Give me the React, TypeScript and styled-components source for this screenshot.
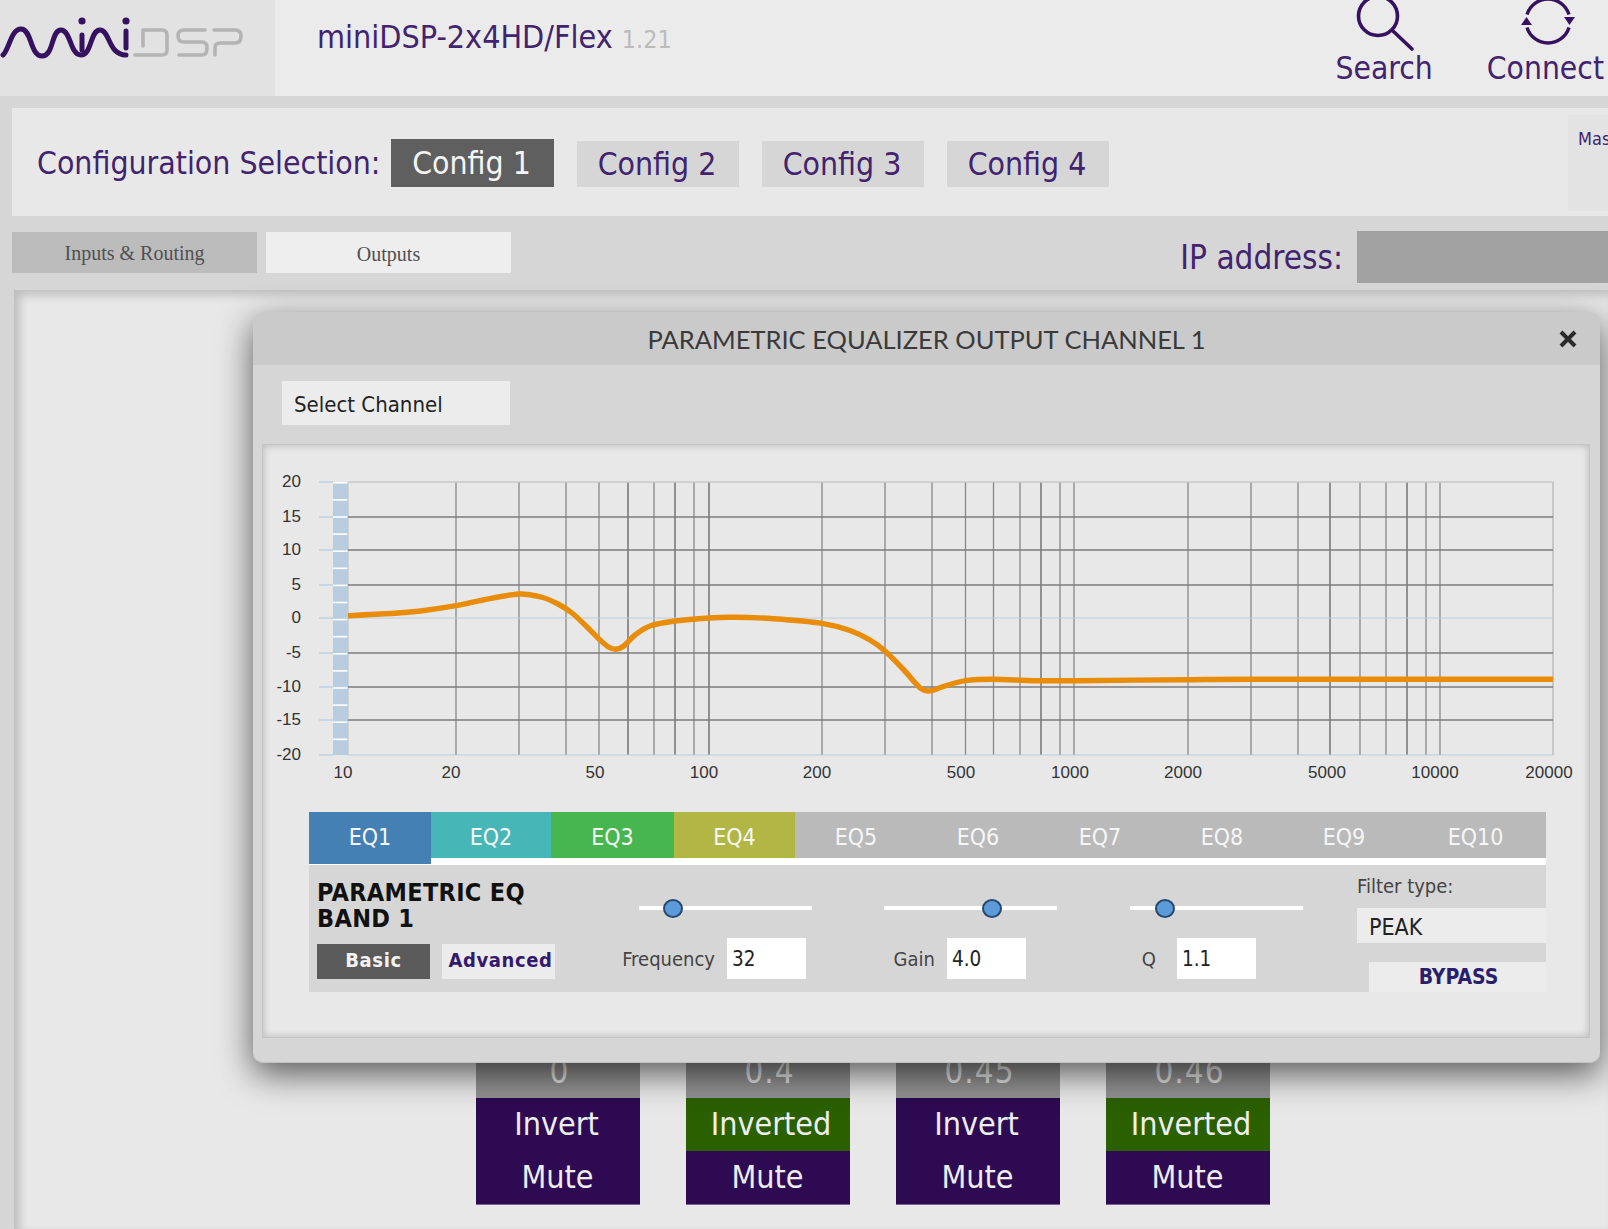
import React from 'react'
import styled, { createGlobalStyle } from 'styled-components'

const PURPLE = '#41236f'
const FONT = '"DejaVu Sans Condensed", "DejaVu Sans", sans-serif'

const CONFIGS = ['Config 1', 'Config 2', 'Config 3', 'Config 4']
const EQ_TABS = [
  { name: 'EQ1', color: '#4480b4' },
  { name: 'EQ2', color: '#47b6b6' },
  { name: 'EQ3', color: '#47b64e' },
  { name: 'EQ4', color: '#b2b645' },
  { name: 'EQ5', color: '#bababa' },
  { name: 'EQ6', color: '#bababa' },
  { name: 'EQ7', color: '#bababa' },
  { name: 'EQ8', color: '#bababa' },
  { name: 'EQ9', color: '#bababa' },
  { name: 'EQ10', color: '#bababa' },
]
const CHANNELS = [
  { delay: '0', inverted: false },
  { delay: '0.4', inverted: true },
  { delay: '0.45', inverted: false },
  { delay: '0.46', inverted: true },
]

// chart coordinates are page pixels, the svg viewBox starts at the panel corner
const PLOT = { left: 348, right: 1553, top: 482, bottom: 755, stripLeft: 333, tickLeft: 319 }
const GAIN_LINES = [
  { label: '20', y: 482 },
  { label: '15', y: 517 },
  { label: '10', y: 550 },
  { label: '5', y: 585 },
  { label: '0', y: 618 },
  { label: '-5', y: 653 },
  { label: '-10', y: 687 },
  { label: '-15', y: 720 },
  { label: '-20', y: 755 },
]
const FREQ_LINES = [
  456, 519, 566, 599, 628, 654, 675, 694, 709, 822, 885, 932, 965.5, 993.5, 1020, 1041, 1060, 1074, 1188,
  1251, 1298, 1330, 1360, 1386, 1407, 1426, 1440,
]
const HEAVY_LINES = [628, 675, 709, 1041, 1330, 1407]
const FREQ_LABELS = [
  { label: '10', x: 343 },
  { label: '20', x: 451 },
  { label: '50', x: 595 },
  { label: '100', x: 704 },
  { label: '200', x: 817 },
  { label: '500', x: 961 },
  { label: '1000', x: 1070 },
  { label: '2000', x: 1183 },
  { label: '5000', x: 1327 },
  { label: '10000', x: 1435 },
  { label: '20000', x: 1549 },
]
const CURVE: [number, number][] = [
  [348, 615.7], [394, 613.3], [420.7, 611], [456, 605.7], [483, 600], [519, 594], [541, 597], [558, 604],
  [572, 613], [586, 626], [599, 639], [608, 646.7], [615.8, 649.3], [623.8, 646], [635, 635], [650.6, 625.7],
  [675, 621], [708.7, 618], [733, 617.3], [773.4, 618.7], [822, 623.3], [850, 630.5], [870, 640], [885, 651],
  [903, 669], [920.7, 688.3], [931, 690.7], [943, 686.7], [965.5, 680.7], [993.5, 679.3], [1035, 680.7],
  [1074, 680.7], [1188, 679.7], [1251, 679.3], [1553, 679.3],
]

const smoothPath = (pts: [number, number][]) => {
  let d = `M${pts[0][0]},${pts[0][1]}`
  for (let i = 0; i < pts.length - 1; i++) {
    const p0 = pts[Math.max(i - 1, 0)]
    const p1 = pts[i]
    const p2 = pts[i + 1]
    const p3 = pts[Math.min(i + 2, pts.length - 1)]
    const c1x = p1[0] + (p2[0] - p0[0]) / 6
    const c1y = p1[1] + (p2[1] - p0[1]) / 6
    const c2x = p2[0] - (p3[0] - p1[0]) / 6
    const c2y = p2[1] - (p3[1] - p1[1]) / 6
    d += ` C${c1x.toFixed(1)},${c1y.toFixed(1)} ${c2x.toFixed(1)},${c2y.toFixed(1)} ${p2[0]},${p2[1]}`
  }
  return d
}

const Logo = () => (
  <svg width="250" height="70" viewBox="0 0 250 70" fill="none" aria-label="miniDSP">
    <g stroke="#36115f" strokeWidth="5" strokeLinecap="round">
      <path d="M3,55 C9,50 11,29 21,29 C32,29 30,56 42,56 C54,56 51,30 61,30 C71,30 70,55 81,55 C92,55 90,30 100,30 C110,30 108,55 126,55" />
      <path d="M82,35 V50 M126,31 V48" />
    </g>
    <circle cx="82" cy="21" r="3.6" fill="#36115f" />
    <circle cx="126" cy="21" r="3.6" fill="#36115f" />
    <g stroke="#b4b4b4" strokeWidth="3.6" strokeLinecap="round" strokeLinejoin="round">
      <path d="M135,55 H162 Q167,55 167,50 V35 Q167,30 162,30 H143 V46" />
      <path d="M205,30 H184 Q178,30 178,36 Q178,42 184,42 H202 Q207,42 207,48 Q207,55 202,55 H179" />
      <path d="M215,55 V48 Q215,43 220,43 H235 Q241,43 241,36 Q241,30 235,30 H214" />
    </g>
  </svg>
)

const SearchIcon = () => (
  <svg width="60" height="52" viewBox="0 0 60 52" fill="none" stroke="#36115f" strokeWidth="3.6" strokeLinecap="round">
    <circle cx="24" cy="18" r="19.5" />
    <path d="M39,33 L58,51" />
  </svg>
)

const ConnectIcon = () => (
  <svg width="60" height="52" viewBox="0 0 60 52" fill="none" stroke="#36115f" strokeWidth="3.4">
    <path d="M12,16.5 A22,22 0 0 1 54,16.5" />
    <path d="M54,29.5 A22,22 0 0 1 12,29.5" />
    <path d="M49,19 H60 L54.5,27 Z" fill="#36115f" stroke="none" />
    <path d="M6,27 H17 L11.5,19 Z" fill="#36115f" stroke="none" />
  </svg>
)

const CloseIcon = () => (
  <svg width="18" height="18" viewBox="0 0 18 18" stroke="#2a2a2a" strokeWidth="4">
    <path d="M2,2 L16,16 M16,2 L2,16" />
  </svg>
)

const EqChart = () => (
  <ChartSvg width="1326" height="340" viewBox="263 460 1326 340">
    <rect x={PLOT.stripLeft} y={PLOT.top} width={PLOT.left - PLOT.stripLeft} height={PLOT.bottom - PLOT.top} fill="#b9cde0" />
    {Array.from({ length: 16 }, (_, i) => (
      <rect key={i} x={PLOT.stripLeft} y={PLOT.top + i * 17.1} width={PLOT.left - PLOT.stripLeft} height="1.6" fill="#fff" />
    ))}
    {FREQ_LINES.map((x) => (
      <line
        key={x}
        x1={x}
        x2={x}
        y1={PLOT.top}
        y2={PLOT.bottom}
        stroke={HEAVY_LINES.includes(x) ? '#909090' : '#888888'}
        strokeWidth={HEAVY_LINES.includes(x) ? 2 : 1.3}
      />
    ))}
    <line x1={PLOT.left} x2={PLOT.left} y1={PLOT.top} y2={PLOT.bottom} stroke="#c4c4c4" strokeWidth="1.2" />
    <line x1={PLOT.right} x2={PLOT.right} y1={PLOT.top} y2={PLOT.bottom} stroke="#bdbdbd" strokeWidth="1.5" />
    {GAIN_LINES.map(({ label, y }) => {
      const soft = label === '0' || label === '-20'
      const top = label === '20'
      return (
        <g key={label}>
          <line x1={PLOT.tickLeft} x2={PLOT.stripLeft} y1={y} y2={y} stroke="#b9cde0" strokeWidth="1.3" />
          <line
            x1={PLOT.left}
            x2={PLOT.right}
            y1={y}
            y2={y}
            stroke={soft ? '#b9cde0' : top ? '#c8c8c8' : '#7d7d7d'}
            strokeWidth={soft ? 1.2 : 1.5}
          />
          <AxisText x="301" y={y + 4.5} textAnchor="end">
            {label}
          </AxisText>
        </g>
      )
    })}
    {FREQ_LABELS.map(({ label, x }) => (
      <AxisText key={label} x={x} y="778" textAnchor="middle">
        {label}
      </AxisText>
    ))}
    <path d={smoothPath(CURVE)} fill="none" stroke="#e88c0a" strokeWidth="5.4" strokeLinejoin="round" />
  </ChartSvg>
)

const GlobalStyle = createGlobalStyle`
  html, body {
    margin: 0;
    padding: 0;
    background: #d6d6d6;
    overflow: hidden;
  }
  * {
    box-sizing: border-box;
  }
`

const App: React.FC = () => {
  return (
    <Page>
      <GlobalStyle />
      <Header>
        <LogoBlock>
          <Logo />
        </LogoBlock>
        <DeviceTitle>
          miniDSP-2x4HD/Flex<Version>1.21</Version>
        </DeviceTitle>
        <HeaderActions>
          <HeaderAction>
            <SearchIcon />
            <span>Search</span>
          </HeaderAction>
          <HeaderAction>
            <ConnectIcon />
            <span>Connect</span>
          </HeaderAction>
        </HeaderActions>
      </Header>

      <ConfigBar>
        <ConfigLabel>Configuration Selection:</ConfigLabel>
        <ConfigButtons>
          {CONFIGS.map((name, i) => (
            <ConfigButton key={name} $active={i === 0}>
              {name}
            </ConfigButton>
          ))}
        </ConfigButtons>
        <MasterBox>Mas</MasterBox>
      </ConfigBar>

      <TabRow>
        <PageTab>Inputs &amp; Routing</PageTab>
        <PageTab $active>Outputs</PageTab>
        <IpLabel>IP address:</IpLabel>
        <IpBox />
      </TabRow>

      <Frame>
        <Channels>
          {CHANNELS.map((ch) => (
            <Channel key={ch.delay}>
              <DelayValue>{ch.delay}</DelayValue>
              <ChannelButton $green={ch.inverted}>{ch.inverted ? 'Inverted' : 'Invert'}</ChannelButton>
              <MuteButton>Mute</MuteButton>
            </Channel>
          ))}
        </Channels>
      </Frame>

      <Modal>
        <ModalHeader>
          <span />
          <ModalTitle>PARAMETRIC EQUALIZER OUTPUT CHANNEL 1</ModalTitle>
          <CloseButton>
            <CloseIcon />
          </CloseButton>
        </ModalHeader>
        <ModalToolbar>
          <SelectChannel>Select Channel</SelectChannel>
        </ModalToolbar>
        <ModalPanel>
          <EqChart />
          <EqTabs>
            {EQ_TABS.map((tab, i) => (
              <EqTab key={tab.name} $color={tab.color} $active={i === 0}>
                {tab.name}
              </EqTab>
            ))}
          </EqTabs>
          <BandPanel>
            <BandInfo>
              <BandTitle>
                PARAMETRIC EQ
                <br />
                BAND 1
              </BandTitle>
              <ModeButtons>
                <ModeButton $active>Basic</ModeButton>
                <ModeButton>Advanced</ModeButton>
              </ModeButtons>
            </BandInfo>
            <SliderGroup $left={84}>
              <SliderTrack>
                <SliderThumb $pos={34} />
              </SliderTrack>
              <ValueRow $inset={6} $gap={12}>
                <ValueLabel>Frequency</ValueLabel>
                <ValueBox>32</ValueBox>
              </ValueRow>
            </SliderGroup>
            <SliderGroup $left={72}>
              <SliderTrack>
                <SliderThumb $pos={108} />
              </SliderTrack>
              <ValueRow $inset={31} $gap={12}>
                <ValueLabel>Gain</ValueLabel>
                <ValueBox>4.0</ValueBox>
              </ValueRow>
            </SliderGroup>
            <SliderGroup $left={73}>
              <SliderTrack>
                <SliderThumb $pos={35} />
              </SliderTrack>
              <ValueRow $inset={47} $gap={21}>
                <ValueLabel>Q</ValueLabel>
                <ValueBox>1.1</ValueBox>
              </ValueRow>
            </SliderGroup>
            <FilterColumn>
              <ValueLabel>Filter type:</ValueLabel>
              <FilterSelect>PEAK</FilterSelect>
              <BypassButton>BYPASS</BypassButton>
            </FilterColumn>
          </BandPanel>
        </ModalPanel>
      </Modal>
    </Page>
  )
}

export default App

const Page = styled.div`
  position: relative;
  width: 1608px;
  height: 1229px;
  overflow: hidden;
  background: #d6d6d6;
  font-family: ${FONT};
  color: ${PURPLE};
`

const Header = styled.header`
  display: flex;
  height: 96px;
  background: #ebebeb;
`

const LogoBlock = styled.div`
  width: 275px;
  background: #e2e2e2;
`

const DeviceTitle = styled.div`
  margin: 17px 0 0 42px;
  font-size: 32px;
  line-height: 40px;
  white-space: nowrap;
`

const Version = styled.span`
  margin-left: 9px;
  font-size: 25px;
  color: #bbbbbb;
`

const HeaderActions = styled.div`
  display: flex;
  gap: 54px;
  margin-left: auto;
  padding-right: 4px;
`

const HeaderAction = styled.div`
  display: flex;
  flex-direction: column;
  align-items: center;
  font-size: 31.5px;
  line-height: 38px;
  svg {
    display: block;
    margin-top: -2px;
    overflow: visible;
  }
  span {
    margin-top: -1px;
  }
`

const ConfigBar = styled.div`
  display: flex;
  align-items: center;
  height: 108px;
  margin: 12px 0 15px 12px;
  padding: 2px 0 0 25px;
  background: #e8e8e8;
`

const ConfigLabel = styled.div`
  width: 354px;
  font-size: 31.7px;
  white-space: nowrap;
`

const ConfigButtons = styled.div`
  display: flex;
  align-items: flex-end;
  gap: 23px;
  height: 48px;
`

const ConfigButton = styled.div<{ $active?: boolean }>`
  display: flex;
  align-items: center;
  justify-content: center;
  width: ${({ $active }) => ($active ? '163px' : '162px')};
  height: ${({ $active }) => ($active ? '48px' : '46px')};
  padding-right: 2px;
  font-size: 31.7px;
  background: ${({ $active }) => ($active ? '#5f5f5f' : '#d6d6d6')};
  color: ${({ $active }) => ($active ? '#f4f4f4' : PURPLE)};
`

const MasterBox = styled.div`
  align-self: stretch;
  width: 40px;
  margin: 5px 0 5px auto;
  padding: 13px 0 0 10px;
  overflow: hidden;
  font-size: 18px;
  white-space: nowrap;
  background: #e3e3e3;
`

const TabRow = styled.div`
  display: flex;
  height: 52px;
  padding-left: 12px;
`

const PageTab = styled.div<{ $active?: boolean }>`
  display: flex;
  align-items: center;
  justify-content: center;
  width: 245px;
  height: 41px;
  margin: 1px 9px 0 0;
  padding-top: ${({ $active }) => ($active ? '4px' : '1px')};
  font-family: 'Liberation Serif', serif;
  font-size: 20px;
  color: #505050;
  background: ${({ $active }) => ($active ? '#eeeeee' : '#bcbcbc')};
`

const IpLabel = styled.div`
  margin-left: auto;
  padding-right: 14px;
  font-size: 33px;
  line-height: 54px;
`

const IpBox = styled.div`
  width: 251px;
  background: #a2a2a2;
`

const Frame = styled.main`
  height: 939px;
  margin: 7px 0 0 14px;
  padding: 754px 0 0 462px;
  background: #e8e8e8;
  box-shadow: inset 6px 5px 10px rgba(0, 0, 0, 0.18);
`

const Channels = styled.div`
  display: flex;
  gap: 46px;
`

const Channel = styled.div`
  width: 164px;
  text-align: center;
  font-size: 32px;
  color: #eeeeee;
`

const DelayValue = styled.div`
  height: 54px;
  padding: 8px 0 0 3px;
  font-size: 33px;
  line-height: 40px;
  letter-spacing: 1px;
  color: #e6e6e6;
  background: #929292;
`

const ChannelButton = styled.div<{ $green?: boolean }>`
  height: 53px;
  padding: ${({ $green }) => ($green ? '0 0 0 6px' : '0 3px 0 0')};
  line-height: 53px;
  background: ${({ $green }) => ($green ? '#2a6000' : '#2d0a52')};
`

const MuteButton = styled.div`
  height: 54px;
  padding-right: 1px;
  line-height: 53px;
  background: #2d0a52;
  border-bottom: 1px solid #7a5f98;
`

const Modal = styled.section`
  position: absolute;
  left: 253px;
  top: 312px;
  display: flex;
  flex-direction: column;
  width: 1347px;
  height: 751px;
  border-radius: 10px;
  background: #d6d6d6;
  box-shadow: inset 0 -1px 0 #c2c2c2, 0 11px 34px rgba(0, 0, 0, 0.62);
`

const ModalHeader = styled.div`
  display: grid;
  grid-template-columns: 1fr auto 1fr;
  align-items: center;
  height: 53px;
  border-radius: 10px 10px 0 0;
  background: #cacaca;
`

const ModalTitle = styled.div`
  font-family: Lato, sans-serif;
  font-size: 25.5px;
  color: #3a3a3a;
  white-space: nowrap;
`

const CloseButton = styled.div`
  justify-self: end;
  display: flex;
  padding-right: 23px;
`

const ModalToolbar = styled.div`
  height: 79px;
  padding: 16px 0 0 29px;
`

const SelectChannel = styled.div`
  width: 228px;
  height: 44px;
  padding-left: 12px;
  font-size: 22px;
  line-height: 47px;
  color: #222222;
  background: #ececec;
`

const ModalPanel = styled.div`
  width: 1328px;
  height: 594px;
  margin-left: 9px;
  padding-top: 15px;
  background: #e8e8e8;
  border: 1px solid #c4c4c4;
  box-shadow: inset 0 0 7px 1px rgba(0, 0, 0, 0.18);
`

const ChartSvg = styled.svg`
  display: block;
`

const AxisText = styled.text`
  font-family: 'Liberation Sans', sans-serif;
  font-size: 17px;
  fill: #333333;
`

const EqTabs = styled.div`
  display: grid;
  grid-template-columns: 122px 120px 123px 121px repeat(5, 122px) 141px;
  width: 1237px;
  height: 53px;
  margin: 12px 0 0 46px;
  border-bottom: 7px solid #ffffff;
`

const EqTab = styled.div<{ $color: string; $active?: boolean }>`
  height: ${({ $active }) => ($active ? '52px' : '46px')};
  font-size: 23px;
  line-height: 50px;
  text-align: center;
  color: #f6f6f6;
  background: ${({ $color }) => $color};
`

const BandPanel = styled.div`
  display: flex;
  width: 1237px;
  height: 127px;
  margin: 0 0 0 46px;
  background: #d6d6d6;
`

const BandInfo = styled.div`
  width: 238px;
  margin-left: 8px;
  padding-top: 15px;
`

const BandTitle = styled.div`
  font-size: 25px;
  font-weight: 700;
  line-height: 26px;
  letter-spacing: 0.3px;
  color: #111111;
  white-space: nowrap;
`

const ModeButtons = styled.div`
  display: flex;
  gap: 12px;
  margin-top: 12px;
`

const ModeButton = styled.div<{ $active?: boolean }>`
  width: 113px;
  height: 35px;
  padding-left: ${({ $active }) => ($active ? '0' : '4px')};
  font-size: 20px;
  font-weight: 700;
  line-height: 33px;
  letter-spacing: 0.6px;
  text-align: center;
  color: ${({ $active }) => ($active ? '#f2f2f2' : '#35196f')};
  background: ${({ $active }) => ($active ? '#5a5a5a' : '#ececec')};
`

const SliderGroup = styled.div<{ $left: number }>`
  width: 173px;
  margin-left: ${({ $left }) => $left}px;
  padding-top: 34px;
`

const SliderTrack = styled.div`
  position: relative;
  height: 18px;
  margin-bottom: 1px;
  &::before {
    content: '';
    position: absolute;
    left: 0;
    right: 0;
    top: 7px;
    height: 4px;
    background: #ffffff;
  }
`

const SliderThumb = styled.div<{ $pos: number }>`
  position: absolute;
  top: 0;
  left: ${({ $pos }) => $pos - 10}px;
  width: 20px;
  height: 19px;
  border-radius: 50%;
  border: 2px solid #27476f;
  background: #5c9bd9;
`

const ValueRow = styled.div<{ $inset: number; $gap: number }>`
  display: flex;
  align-items: center;
  justify-content: flex-end;
  gap: ${({ $gap }) => $gap}px;
  margin-top: 21px;
  padding-right: ${({ $inset }) => $inset}px;
`

const ValueLabel = styled.div`
  font-size: 20px;
  line-height: 22px;
  color: #444444;
  white-space: nowrap;
`

const ValueBox = styled.div`
  flex: none;
  width: 79px;
  height: 41px;
  padding-left: 5px;
  font-size: 20.5px;
  line-height: 43px;
  color: #222222;
  background: #ffffff;
`

const FilterColumn = styled.div`
  width: 189px;
  margin-left: auto;
  padding-top: 10px;
`

const FilterSelect = styled.div`
  height: 35px;
  margin-top: 11px;
  padding-left: 12px;
  font-size: 23px;
  line-height: 39px;
  color: #222222;
  background: #ececec;
`

const BypassButton = styled.div`
  height: 30px;
  margin: 19px 0 0 12px;
  padding-left: 2px;
  font-size: 21px;
  font-weight: 700;
  line-height: 30px;
  text-align: center;
  color: #2a1f6e;
  background: #ececec;
`
